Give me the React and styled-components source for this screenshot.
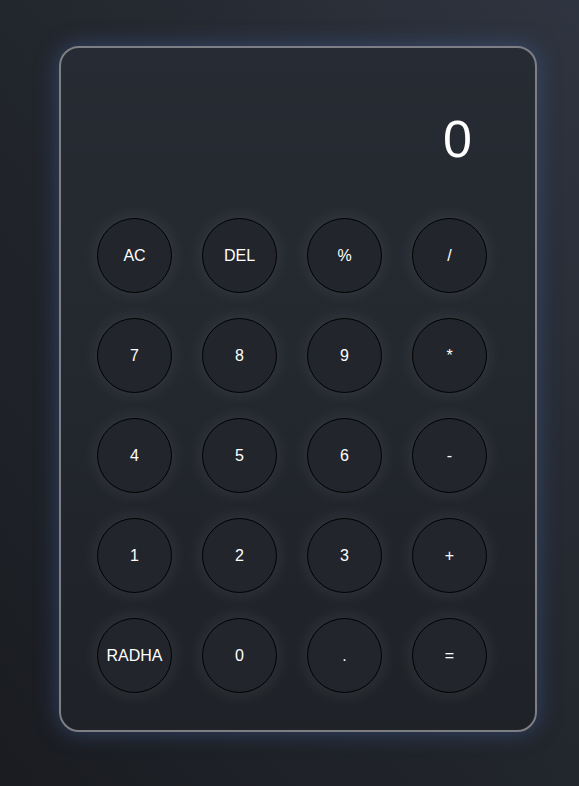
import React, { useState } from "react";
import styled, { createGlobalStyle } from "styled-components";

const GlobalStyle = createGlobalStyle`
  html, body {
    margin: 0;
    padding: 0;
  }
  body {
    font-family: "Liberation Sans", Arial, sans-serif;
    background: #1d2025;
  }
`;

const Page = styled.div`
  width: 579px;
  height: 786px;
  box-sizing: border-box;
  padding: 46px 0 0 59px;
  background: linear-gradient(to top right, #1a1c21 0%, #23272e 55%, #2f3540 100%);
  overflow: hidden;
`;

const Card = styled.div`
  width: 478px;
  height: 686px;
  box-sizing: border-box;
  border: 2px solid #7d7f84;
  border-radius: 20px;
  padding: 0 48px 0 36px;
  background: linear-gradient(to bottom, #272b33 0%, #23272e 50%, #1f2227 100%);
  box-shadow: 0 0 22px rgba(70, 102, 165, 0.5);
`;

const Display = styled.div`
  height: 60px;
  margin-top: 61px;
  margin-bottom: 49px;
  padding-right: 15px;
  text-align: right;
  color: #ffffff;
  font-size: 52px;
  line-height: 60px;
`;

const Keys = styled.div`
  display: grid;
  grid-template-columns: repeat(4, 75px);
  grid-auto-rows: 75px;
  column-gap: 30px;
  row-gap: 25px;
`;

const Key = styled.button`
  width: 75px;
  height: 75px;
  padding: 0;
  border: 1px solid #000000;
  border-radius: 50%;
  background: #22262c;
  color: #ffffff;
  font-family: "Liberation Sans", Arial, sans-serif;
  font-size: 16px;
  box-shadow: 0 0 18px rgba(255, 255, 255, 0.1);
  outline: none;
  cursor: pointer;
`;

const keys = [
  "AC", "DEL", "%", "/",
  "7", "8", "9", "*",
  "4", "5", "6", "-",
  "1", "2", "3", "+",
  "RADHA", "0", ".", "=",
];

export default function App() {
  const [value, setValue] = useState("0");

  const press = (k) => {
    if (k === "AC") return setValue("0");
    if (k === "DEL") return setValue(value.length > 1 ? value.slice(0, -1) : "0");
    if (k === "RADHA") return setValue("RADHA");
    if (k === "=") {
      try {
        // eslint-disable-next-line no-new-func
        return setValue(String(Function(`return (${value})`)()));
      } catch (e) {
        return setValue("Error");
      }
    }
    setValue(value === "0" ? k : value + k);
  };

  return (
    <>
      <GlobalStyle />
      <Page>
        <Card>
          <Display>{value}</Display>
          <Keys>
            {keys.map((k) => (
              <Key key={k} onClick={() => press(k)}>
                {k}
              </Key>
            ))}
          </Keys>
        </Card>
      </Page>
    </>
  );
}
